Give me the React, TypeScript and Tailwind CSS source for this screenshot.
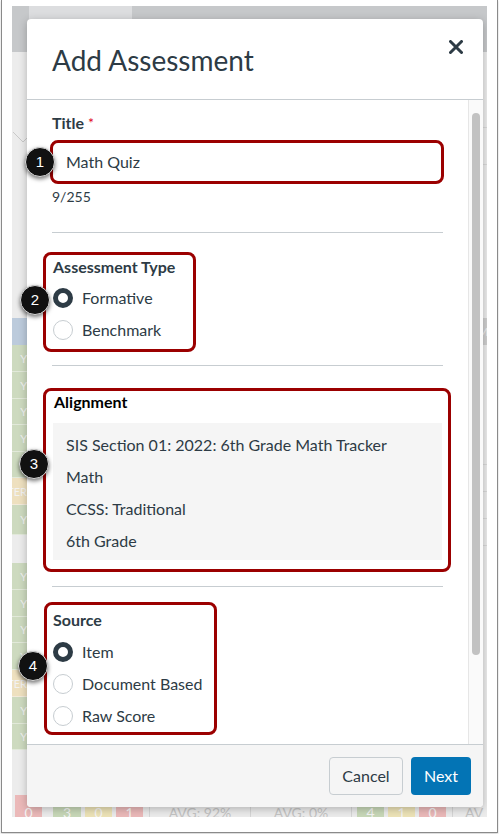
import React from "react";

type Cell = { h: number; tone: "light" | "blue" | "green" | "orange"; tag?: string };

const leftCells: Cell[] = [
  { h: 266, tone: "light" },
  { h: 27, tone: "blue" },
  { h: 27, tone: "green", tag: "Y" },
  { h: 27, tone: "green", tag: "Y" },
  { h: 26, tone: "green", tag: "Y" },
  { h: 27, tone: "green", tag: "Y" },
  { h: 26, tone: "green", tag: "Y" },
  { h: 27, tone: "orange", tag: "TER" },
  { h: 30, tone: "green", tag: "Y" },
  { h: 28, tone: "light" },
  { h: 27, tone: "green", tag: "Y" },
  { h: 27, tone: "green", tag: "Y" },
  { h: 26, tone: "green", tag: "Y" },
  { h: 27, tone: "green", tag: "Y" },
  { h: 27, tone: "orange", tag: "TER" },
  { h: 27, tone: "green", tag: "Y" },
  { h: 26, tone: "green", tag: "Y" },
];

const toneClass = {
  light: "bg-[#ececec]",
  blue: "bg-[#bccbdc]",
  green: "bg-[#cddabf] border-b border-[#e2e9da]",
  orange: "bg-[#eee0bf] border-b border-[#f3eadb]",
};

const alignment = [
  "SIS Section 01: 2022: 6th Grade Math Tracker",
  "Math",
  "CCSS: Traditional",
  "6th Grade",
];

function Radio({ label, checked }: { label: string; checked?: boolean }) {
  return (
    <div className="flex items-center gap-[9px] h-[32px]">
      <span
        className={
          checked
            ? "w-[20px] h-[20px] rounded-full bg-white border-[5px] border-[#2d3b45]"
            : "w-[20px] h-[20px] rounded-full bg-white border border-[#c7cdd1]"
        }
      />
      <span className="text-[16px] text-[#2d3b45]">{label}</span>
    </div>
  );
}

function Callout({ n, className }: { n: number; className: string }) {
  return (
    <div
      className={`absolute w-[30px] h-[30px] rounded-full bg-[#111] border border-[#d8d8d8] shadow-[0_2px_4px_rgba(0,0,0,0.55)] flex items-center justify-center text-white text-[15px] font-['Liberation_Sans',sans-serif] ${className}`}
    >
      {n}
    </div>
  );
}

function Backdrop() {
  return (
    <div className="h-full flex flex-col">
      {/* top bar of the page underneath */}
      <div className="h-[46px] bg-[#c6c8ca]">
        <div className="ml-[17px] w-[103px] h-[13px] bg-[#dcdddf]" />
      </div>
      <div className="flex-1 flex min-h-0">
        <div className="w-[15px] flex flex-col overflow-hidden">
          {leftCells.map((c, i) => (
            <div
              key={i}
              className={`${toneClass[c.tone]} shrink-0 flex items-center justify-end text-[11px] text-[#f2f2f2] leading-none overflow-hidden whitespace-nowrap`}
              style={{ height: c.h }}
            >
              {i === 0 ? (
                <svg width="15" height="266" viewBox="0 0 15 266" className="shrink-0">
                  <path d="M1 80 L11 90 L15 86" stroke="#c9c9c9" fill="none" strokeWidth="1" />
                </svg>
              ) : (
                c.tag
              )}
            </div>
          ))}
          <div className="flex-1 bg-[#ececec]" />
        </div>
        <div className="flex-1" />
        <div className="w-[9px] flex flex-col bg-[#ececec]">
          <div className="h-[76px] border-b border-[#dadada]" />
          <div className="h-[37px] border-b border-[#dadada]" />
          <div className="h-[153px]" />
          <div className="h-[27px] bg-[#cfcfcf] text-[11px] text-[#eeeeee] leading-[27px] overflow-hidden">Mu</div>
          <div className="h-[120px] border-b border-[#dadada]" />
          <div className="h-[27px] border-b border-[#dadada]" />
          <div className="h-[27px] border-b border-[#dadada]" />
          <div className="h-[27px] border-b border-[#dadada]" />
          <div className="flex-1" />
        </div>
      </div>
      {/* bottom row of counts */}
      <div className="h-[22px] bg-[#ececec] flex text-[14px] text-[#c4c4c4] leading-[36px] overflow-hidden">
        <div className="ml-[3px] w-[27px] bg-[#ebb9b9] text-center text-[#f5f5f5]">0</div>
        <div className="ml-[11px] w-[28px] bg-[#c8d8b8] text-center text-[#f5f5f5]">3</div>
        <div className="ml-[4px] w-[27px] bg-[#ede3b7] text-center text-[#f5f5f5]">0</div>
        <div className="ml-[4px] w-[27px] bg-[#ebb9b9] text-center text-[#f5f5f5]">1</div>
        <div className="ml-[6px] w-[101px] border-l border-[#d6d6d6] text-center">AVG: 92%</div>
        <div className="w-[101px] border-l border-[#d6d6d6] text-center">AVG: 0%</div>
        <div className="w-[6px] border-l border-[#d6d6d6]" />
        <div className="w-[27px] bg-[#c8d8b8] text-center text-[#f5f5f5]">4</div>
        <div className="ml-[4px] w-[27px] bg-[#ede3b7] text-center text-[#f5f5f5]">1</div>
        <div className="ml-[4px] w-[27px] bg-[#ebb9b9] text-center text-[#f5f5f5]">0</div>
        <div className="ml-[6px] flex-1 border-l border-[#d6d6d6] pl-[12px]">AV</div>
      </div>
    </div>
  );
}

function Modal() {
  return (
    <div className="absolute left-[15px] top-[13px] w-[456px] h-[788px] bg-white rounded-[4px] shadow-[0_2px_8px_rgba(0,0,0,0.25)] flex flex-col overflow-hidden">
      <div className="h-[81px] shrink-0 border-b border-[#c7cdd1] flex justify-between">
        <h1 className="self-center pl-[25px] pt-[1px] text-[28px] text-[#2d3b45] leading-none">Add Assessment</h1>
        <svg width="14" height="14" viewBox="0 0 14 14" className="mt-[21px] mr-[20px]">
          <path d="M1.5 1.5 L12.5 12.5 M12.5 1.5 L1.5 12.5" stroke="#2d3b45" strokeWidth="3" strokeLinecap="round" />
        </svg>
      </div>

      <div className="flex-1 flex min-h-0">
        <div className="flex-1 pl-[25px] pr-[25px] pt-[13px] text-[#2d3b45]">
          <div className="text-[16px] leading-[20px] font-bold">
            Title <span className="text-[#e0061f] font-normal align-top text-[14px]">*</span>
          </div>
          <div className="mt-[7px] -ml-[2px] -mr-[1px] h-[44px] border-[3px] border-[#9b0000] rounded-[8px] flex items-center pl-[13px] text-[16px]">
            Math Quiz
          </div>
          <div className="mt-[3px] text-[14px] leading-[20px]">9/255</div>
          <div className="mt-[25px] border-t border-[#c7cdd1]" />

          <div className="mt-[19px] -ml-[9px] w-[153px] border-[3px] border-[#9b0000] rounded-[8px] pl-[7px] pt-[2px] pb-[3px]">
            <div className="text-[16px] leading-[20px] font-bold">Assessment Type</div>
            <div className="mt-[5px]">
              <Radio label="Formative" checked />
              <Radio label="Benchmark" />
            </div>
          </div>
          <div className="mt-[13px] border-t border-[#c7cdd1]" />

          <div className="mt-[22px] -ml-[9px] -mr-[8px] border-[3px] border-[#9b0000] rounded-[8px] pl-[7px] pr-[6px] pt-[1px] pb-[9px]">
            <div className="pl-[1px] text-[16px] leading-[20px] font-bold text-black">Alignment</div>
            <div className="mt-[11px] bg-[#f5f5f5] pl-[13px] pt-[6px] pb-[3px]">
              {alignment.map((line) => (
                <div key={line} className="text-[16px] leading-[32px]">
                  {line}
                </div>
              ))}
            </div>
          </div>
          <div className="mt-[14px] border-t border-[#c7cdd1]" />

          <div className="mt-[15px] -ml-[8px] w-[173px] border-[3px] border-[#9b0000] rounded-[8px] pl-[6px] pt-[5px]">
            <div className="text-[16px] leading-[20px] font-bold">Source</div>
            <div className="mt-[6px]">
              <Radio label="Item" checked />
              <Radio label="Document Based" />
              <Radio label="Raw Score" />
            </div>
          </div>
        </div>

        {/* scrollbar */}
        <div className="w-[15px] shrink-0 border-l border-[#e6e6e6] bg-[#fafafa] pt-[13px] pl-[3px]">
          <div className="w-[8px] h-[542px] rounded-full bg-[#c2c2c2]" />
        </div>
      </div>

      <div className="h-[63px] shrink-0 bg-[#f5f5f5] border-t border-[#c7cdd1] flex items-center justify-end gap-[8px] pr-[12px]">
        <button className="w-[74px] h-[38px] rounded-[4px] border border-[#c7cdd1] bg-[#f5f5f5] text-[16px] text-[#2d3b45]">
          Cancel
        </button>
        <button className="w-[60px] h-[38px] rounded-[4px] bg-[#0374b5] text-[16px] text-white">Next</button>
      </div>
    </div>
  );
}

export default function App() {
  return (
    <div className="w-[499px] h-[834px] bg-white font-['Lato',sans-serif]">
      <div className="ml-[1px] w-[497px] h-[833px] border-x border-b border-[#8a8a8a] shadow-[0_1px_2px_rgba(0,0,0,0.2)] pt-[6px] px-[10px]">
        <div className="relative h-[811px] overflow-hidden bg-[#ececec]">
          <Backdrop />
          <Modal />
          <Callout n={1} className="left-[13px] top-[141px]" />
          <Callout n={2} className="left-[8px] top-[279px]" />
          <Callout n={3} className="left-[7px] top-[443px]" />
          <Callout n={4} className="left-[6px] top-[645px]" />
        </div>
      </div>
    </div>
  );
}
